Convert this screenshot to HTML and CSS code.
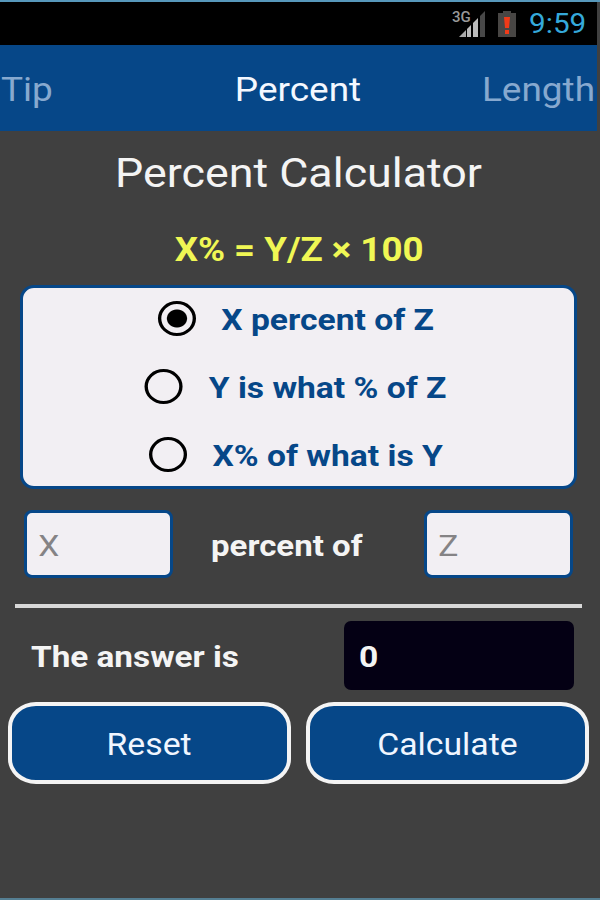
FILE: index.html
```
<!DOCTYPE html>
<html lang="en">
<head>
    <meta charset="utf-8">
    <title>Percent Calculator</title>
    <link rel="stylesheet" href="styles.css">
</head>
<body>
    <div class="screen">
        <div class="status-bar">
            <svg class="signal" width="36" height="30" viewBox="0 0 36 30">
                <text x="0" y="13" class="network">3G</text>
                <path d="M7 28L14 21V28Z" fill="#aaa"/>
                <path d="M15 20L19 16V28H15Z" fill="#bbb"/>
                <path d="M21 14L26 9V28H21Z" fill="#bbb"/>
                <path d="M28 7L33 2V28H28Z" fill="#484848"/>
            </svg>
            <svg class="battery" width="20" height="28" viewBox="0 0 20 28">
                <path d="M1 3H6V1H14V3H19V27H1Z" fill="#484644"/>
                <path d="M7 7H13L12 18H8Z" fill="#f03a18"/>
                <rect x="8" y="20" width="4" height="4" fill="#f03a18"/>
            </svg>
            <span class="clock">9:59</span>
        </div>

        <div class="tabs">
            <span class="tab tab-left">Tip</span>
            <span class="tab active">Percent</span>
            <span class="tab tab-right">Length</span>
        </div>

        <h1>Percent Calculator</h1>
        <p class="formula">X% = Y/Z × 100</p>

        <form id="percentForm">
            <div class="options">
                <label class="option"><input type="radio" name="mode" checked><span>X percent of Z</span></label>
                <label class="option"><input type="radio" name="mode"><span>Y is what % of Z</span></label>
                <label class="option"><input type="radio" name="mode"><span>X% of what is Y</span></label>
            </div>

            <div class="inputs">
                <div class="field"><input type="text" placeholder="X"></div>
                <span class="between">percent of</span>
                <div class="field"><input type="text" placeholder="Z"></div>
            </div>

            <div class="divider"></div>

            <div class="answer-row">
                <span class="answer-label">The answer is</span>
                <div class="answer"><span>0</span></div>
            </div>

            <div class="buttons">
                <button type="reset"><span>Reset</span></button>
                <button type="button"><span>Calculate</span></button>
            </div>
        </form>
    </div>
</body>
</html>
```
FILE: styles.css
```
* {
    box-sizing: border-box;
}
body {
    margin: 0;
    background-color: #404040;
    font-family: Roboto, sans-serif;
    color: #f4f4f4;
}
.screen {
    width: 600px;
    height: 900px;
    padding-right: 3px;
    border-top: 2px solid #5798bb;
    border-bottom: 2px solid #557f93;
    overflow: hidden;
}
.status-bar {
    height: 43px;
    background-color: #000;
    display: flex;
    justify-content: flex-end;
    align-items: center;
    padding-right: 12px;
}
.signal {
    margin-right: 9px;
}
.network {
    font-size: 15px;
    font-weight: 500;
    fill: #999;
}
.battery {
    margin-right: 12px;
}
.clock {
    width: 56px;
    font-size: 27px;
    line-height: 43px;
    padding-top: 2px;
    color: #35a9da;
    transform: scaleX(1.1);
    transform-origin: left;
}
.tabs {
    height: 86px;
    padding: 2px 2px 0 1px;
    background-color: #064788;
    display: grid;
    grid-template-columns: 1fr 1fr 1fr;
    align-items: center;
}
.tab {
    font-size: 33px;
    color: #87a9cf;
    text-align: center;
    transform: scaleX(1.12);
}
.tab.active {
    color: #f4f8ff;
}
.tab-left {
    text-align: left;
    transform-origin: left;
}
.tab-right {
    text-align: right;
    transform-origin: right;
}
h1 {
    margin: 0;
    height: 84px;
    font-size: 40px;
    font-weight: normal;
    line-height: 86px;
    text-align: center;
    transform: scaleX(1.12);
}
.formula {
    margin: 0;
    height: 70px;
    padding-left: 1px;
    font-size: 33px;
    font-weight: bold;
    line-height: 70px;
    text-align: center;
    color: #f0f754;
    transform: scaleX(1.11);
}
.options {
    margin: 0 20px;
    height: 204px;
    background-color: #f2eff3;
    border: 3px solid #064788;
    border-radius: 14px;
    display: flex;
    flex-direction: column;
    justify-content: center;
}
.option {
    height: 68px;
    flex-shrink: 0;
    display: flex;
    justify-content: center;
    align-items: center;
    gap: 23px;
    padding: 0 5px 2px 0;
    font-size: 30px;
    font-weight: bold;
    color: #064788;
    transform: scaleX(1.12);
}
.option span {
    padding-top: 2px;
}
.option input {
    appearance: none;
    width: 34px;
    height: 35px;
    margin: 0;
    border: 3px solid #000;
    border-radius: 50%;
}
.option input:checked {
    background: radial-gradient(circle, #000 8.5px, transparent 9.5px);
}
.inputs {
    margin: 21px 24px 0 24px;
    height: 68px;
    display: flex;
    justify-content: space-between;
    align-items: center;
}
.field {
    width: 149px;
    height: 68px;
    background-color: #f2eff3;
    border: 3px solid #064788;
    border-radius: 8px;
    overflow: hidden;
}
.field input {
    width: 120px;
    height: 62px;
    padding: 2px 0 0 10px;
    border: none;
    background: none;
    font-family: inherit;
    font-size: 30px;
    transform: scaleX(1.12);
    transform-origin: left;
}
.field input::placeholder {
    color: #858385;
}
.between {
    padding: 2px 22px 0 0;
    font-size: 30px;
    font-weight: bold;
    transform: scaleX(1.1);
}
.divider {
    margin: 26px 15px 0;
    height: 4px;
    background-color: #d8d8d8;
}
.answer-row {
    margin: 13px 23px 0 31px;
    height: 69px;
    display: flex;
    justify-content: space-between;
    align-items: center;
    font-size: 30px;
    font-weight: bold;
}
.answer-label {
    padding-top: 2px;
    transform: scaleX(1.11);
    transform-origin: left;
}
.answer {
    width: 230px;
    height: 69px;
    padding-left: 15px;
    border-radius: 7px;
    background-color: #040014;
    line-height: 71px;
}
.answer span {
    display: inline-block;
    transform: scaleX(1.12);
    transform-origin: left;
}
.buttons {
    margin: 12px 8px 0 8px;
    display: flex;
    justify-content: space-between;
}
button {
    width: 283px;
    height: 82px;
    padding: 2px 0 0;
    border: 4px solid #f4f4f4;
    border-radius: 28px / 25px;
    background-color: #064788;
    font-family: inherit;
    font-size: 31px;
    color: #f0f6ff;
}
button span {
    display: inline-block;
    transform: scaleX(1.09);
}
```
